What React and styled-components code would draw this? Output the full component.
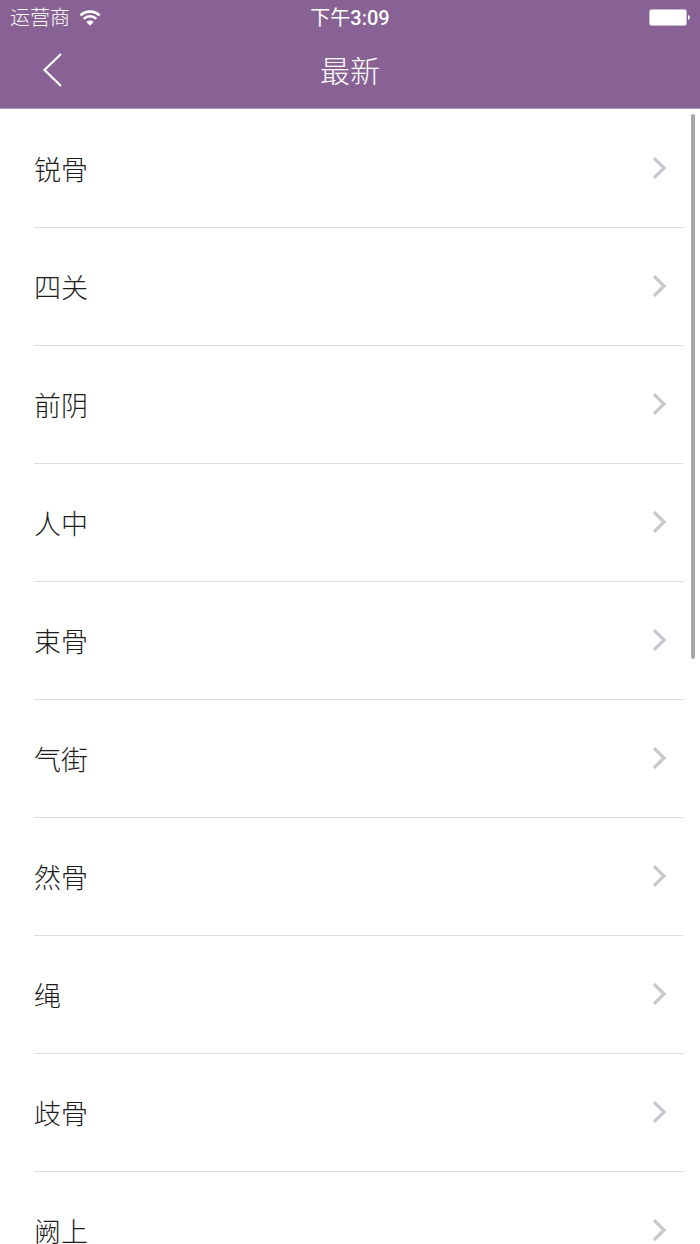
import React from "react";
import styled, { createGlobalStyle } from "styled-components";

const GlobalStyle = createGlobalStyle`
  * { box-sizing: border-box; }
  body {
    margin: 0;
    background: #fff;
    font-family: "Liberation Sans", "Noto Sans CJK SC", sans-serif;
    font-weight: 300;
  }
`;

const Screen = styled.div`
  display: flex;
  flex-direction: column;
  height: 100vh;
`;

const Header = styled.header`
  flex: none;
  background: #886294;
  color: #fff;
  border-bottom: 1px solid #ae96b6;
`;

const StatusBar = styled.div`
  display: grid;
  grid-template-columns: 1fr auto 1fr;
  align-items: center;
  height: 35px;
  padding: 0 10px;
  font-size: 20px;
  line-height: 33px;
`;

const Carrier = styled.div`
  display: flex;
  align-items: center;
  gap: 9px;
`;

const CarrierName = styled.span`
  padding-top: 2px;
`;

const Clock = styled.time`
  padding-top: 2px;
  font-family: Roboto, "Noto Sans CJK SC", sans-serif;
  font-weight: 500;
`;

const Meridiem = styled.span`
  font-weight: 400;
`;

const BatteryIcon = styled.svg`
  justify-self: end;
`;

const NavBar = styled.div`
  display: grid;
  grid-template-columns: 100px 1fr 100px;
  align-items: center;
  height: 73px;
`;

const BackButton = styled.button`
  display: flex;
  align-items: center;
  height: 69px;
  padding: 0 0 0 42px;
  align-self: start;
  border: 0;
  background: none;
  color: inherit;
`;

const Title = styled.h1`
  margin: 0;
  text-align: center;
  font-size: 30px;
  line-height: 72px;
  font-weight: 300;
`;

const Content = styled.main`
  position: relative;
  flex: 1;
  min-height: 0;
`;

const List = styled.ul`
  height: 100%;
  margin: 0;
  padding: 1px 17px 0 34px;
  overflow-y: auto;
  scrollbar-width: none;
  list-style: none;
`;

const Row = styled.a`
  display: flex;
  align-items: center;
  justify-content: space-between;
  height: 118px;
  padding-right: 16px;
  border-bottom: 1px solid #dcdcdc;
  color: #1c1c1c;
  font-size: 27px;
  line-height: 40px;
  text-decoration: none;
`;

const RowLabel = styled.span`
  padding-top: 4px;
`;

const ScrollIndicator = styled.div`
  position: absolute;
  top: 5px;
  right: 5px;
  width: 4px;
  height: 48%;
  border-radius: 2px;
  background: #a8a8a8;
`;

const items = ["锐骨", "四关", "前阴", "人中", "束骨", "气街", "然骨", "绳", "歧骨", "阙上"];

function Wifi() {
  return (
    <svg width="22" height="16" viewBox="0 0 22 16" fill="none" stroke="#fff" aria-hidden="true">
      <path d="M1.4 5.4C7 .3 15 .3 20.6 5.4" strokeWidth="2.6" />
      <path d="M4.7 8.8c3.6-3.3 9-3.3 12.6 0" strokeWidth="2.5" />
      <path d="M7.4 12c1.9-2 5.3-2 7.2 0L11 15.8z" fill="#fff" stroke="none" />
    </svg>
  );
}

function Battery() {
  return (
    <BatteryIcon width="41" height="17" viewBox="0 0 41 17" role="img" aria-label="电池">
      <rect x=".5" y=".5" width="37" height="16" rx="2" fill="#fff" stroke="#c9b9d0" />
      <path d="M39 6c2.6.8 2.6 4.2 0 5z" fill="#fff" />
    </BatteryIcon>
  );
}

function Chevron() {
  return (
    <svg width="15" height="24" viewBox="0 0 15 24" fill="none" aria-hidden="true">
      <path d="M2 1.2 12 11 2 20.8" stroke="#c7c7cc" strokeWidth="3.2" />
    </svg>
  );
}

export default function App() {
  return (
    <Screen>
      <GlobalStyle />
      <Header>
        <StatusBar>
          <Carrier>
            <CarrierName>运营商</CarrierName>
            <Wifi />
          </Carrier>
          <Clock>
            <Meridiem>下午</Meridiem>3:09
          </Clock>
          <Battery />
        </StatusBar>
        <NavBar>
          <BackButton type="button" aria-label="返回">
            <svg width="20" height="34" viewBox="0 0 20 34" fill="none" aria-hidden="true">
              <path d="M19 1 2.5 17 19 33" stroke="#fff" strokeWidth="2.2" />
            </svg>
          </BackButton>
          <Title>最新</Title>
        </NavBar>
      </Header>
      <Content>
        <List>
          {items.map((name) => (
            <li key={name}>
              <Row href="#">
                <RowLabel>{name}</RowLabel>
                <Chevron />
              </Row>
            </li>
          ))}
        </List>
        <ScrollIndicator />
      </Content>
    </Screen>
  );
}
